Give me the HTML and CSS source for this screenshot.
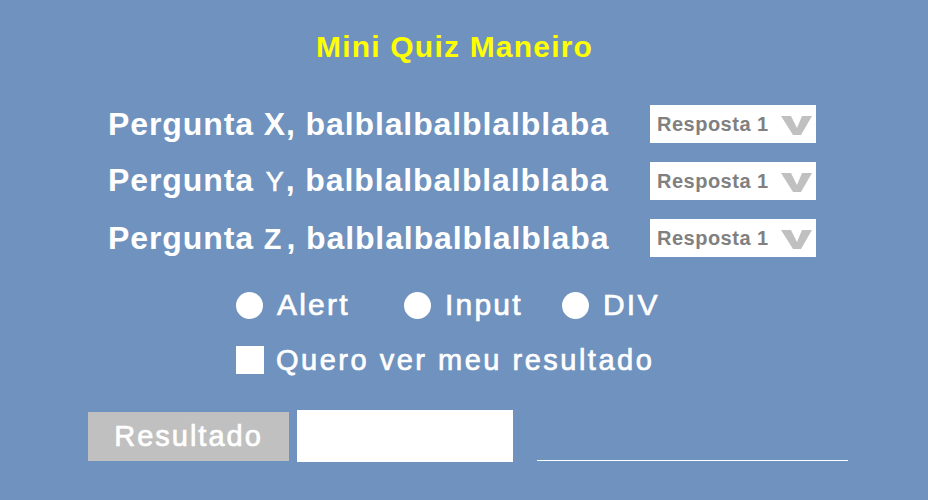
FILE: index.html
```html
<!DOCTYPE html>
<html lang="pt">
<head>
<meta charset="utf-8">
<title>Mini Quiz Maneiro</title>
<link rel="stylesheet" href="styles.css">
</head>
<body>
<main class="quiz">
  <h1 class="title">Mini Quiz Maneiro</h1>

  <div class="questions">
    <div class="question">
      <span class="q-text">Pergunta X, balblalbalblalblaba</span>
      <div class="select">
        <span class="select-label">Resposta 1</span>
        <svg class="chevron" width="31" height="19" viewBox="0 0 31 19"><polygon points="0,0 10,0 16,12 21,0 31,0 20,19 12,19" fill="#c0c0c0"/></svg>
      </div>
    </div>
    <div class="question">
      <span class="q-text">Pergunta <span class="letter-y">Y</span>, balblalbalblalblaba</span>
      <div class="select">
        <span class="select-label">Resposta 1</span>
        <svg class="chevron" width="31" height="19" viewBox="0 0 31 19"><polygon points="0,0 10,0 16,12 21,0 31,0 20,19 12,19" fill="#c0c0c0"/></svg>
      </div>
    </div>
    <div class="question">
      <span class="q-text">Pergunta <span class="letter-z">Z</span>, balblalbalblalblaba</span>
      <div class="select">
        <span class="select-label">Resposta 1</span>
        <svg class="chevron" width="31" height="19" viewBox="0 0 31 19"><polygon points="0,0 10,0 16,12 21,0 31,0 20,19 12,19" fill="#c0c0c0"/></svg>
      </div>
    </div>
  </div>

  <div class="options">
    <label class="opt opt-alert"><span class="radio"></span><span class="opt-label">Alert</span></label>
    <label class="opt opt-input"><span class="radio"></span><span class="opt-label">Input</span></label>
    <label class="opt"><span class="radio"></span><span class="opt-label">DIV</span></label>
  </div>

  <label class="check-row"><span class="checkbox"></span><span class="check-label">Quero ver meu resultado</span></label>

  <div class="result-row">
    <button class="result-btn">Resultado</button>
    <div class="result-box"></div>
    <div class="result-line"></div>
  </div>
</main>
</body>
</html>
```

FILE: styles.css
```css
html, body {
  margin: 0;
  padding: 0;
}

body {
  background: #7092be;
  font-family: "Liberation Sans", Arial, sans-serif;
  color: #ffffff;
  width: 928px;
  height: 500px;
  overflow: hidden;
}

.quiz {
  padding-top: 29px;
}

.title {
  margin: 0 0 0 316px;
  font-size: 30px;
  line-height: 36px;
  font-weight: bold;
  letter-spacing: 1.2px;
  color: #ffff00;
}

.questions {
  margin-top: 40px;
  margin-left: 108px;
  display: flex;
  flex-direction: column;
  gap: 19px;
}

.question {
  display: flex;
  align-items: center;
  height: 38px;
}

.q-text {
  width: 542px;
  font-size: 32px;
  line-height: 38px;
  font-weight: bold;
  letter-spacing: 0.9px;
  white-space: nowrap;
}

.letter-y {
  font-size: 27px;
  font-weight: normal;
  letter-spacing: 0;
  -webkit-text-stroke: 0.6px #ffffff;
  margin: 0 2px 0 2px;
}

.letter-z {
  font-size: 29px;
  letter-spacing: 0;
  margin-right: 5px;
}

.select {
  width: 166px;
  height: 38px;
  background: #ffffff;
  display: flex;
  align-items: center;
  position: relative;
}

.select-label {
  margin-left: 7px;
  font-size: 20px;
  font-weight: bold;
  color: #808080;
  letter-spacing: 0.5px;
}

.chevron {
  position: absolute;
  left: 131px;
  top: 11px;
}

.options {
  margin-top: 33px;
  margin-left: 236px;
  display: flex;
  align-items: center;
  height: 30px;
}

.opt {
  display: flex;
  align-items: center;
}

.opt-alert {
  width: 168px;
}

.opt-input {
  width: 158px;
}

.radio {
  width: 27px;
  height: 27px;
  border-radius: 50%;
  background: #ffffff;
  flex: none;
}

.opt-label {
  margin-left: 14px;
  font-size: 30px;
  line-height: 30px;
  letter-spacing: 2.2px;
  -webkit-text-stroke: 0.7px #ffffff;
}

.check-row {
  margin-top: 25px;
  margin-left: 236px;
  display: flex;
  align-items: center;
  height: 30px;
}

.checkbox {
  width: 28px;
  height: 28px;
  background: #ffffff;
  flex: none;
}

.check-label {
  margin-left: 12px;
  font-size: 29px;
  line-height: 30px;
  letter-spacing: 2.5px;
  -webkit-text-stroke: 0.7px #ffffff;
}

.result-row {
  margin-top: 35px;
  margin-left: 88px;
  display: flex;
  align-items: center;
  height: 52px;
}

.result-btn {
  width: 201px;
  height: 49px;
  border: none;
  padding: 0;
  background: #c0c0c0;
  color: #ffffff;
  font-family: "Liberation Sans", Arial, sans-serif;
  font-size: 29px;
  letter-spacing: 2px;
  -webkit-text-stroke: 0.7px #ffffff;
  margin-top: 1px;
}

.result-box {
  margin-left: 8px;
  width: 216px;
  height: 52px;
  background: #ffffff;
}

.result-line {
  margin-left: 24px;
  width: 311px;
  height: 1px;
  background: #ffffff;
  align-self: flex-end;
  margin-bottom: 1px;
}
```
